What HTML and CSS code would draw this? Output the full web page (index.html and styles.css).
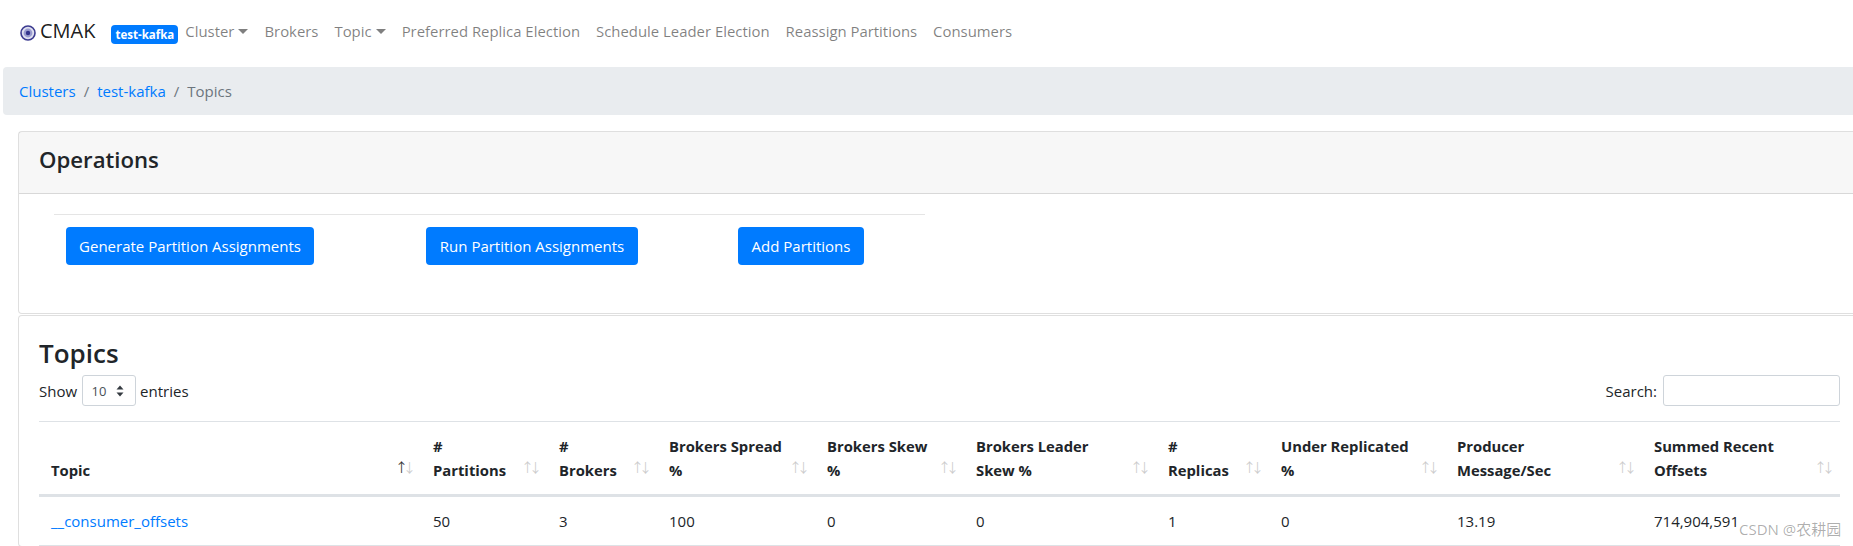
FILE: index.html
```html
<!DOCTYPE html>
<html lang="en">
<head>
    <meta charset="UTF-8">
    <meta name="viewport" content="width=device-width, initial-scale=1.0">
    <title>CMAK - Topics</title>
    <link rel="stylesheet" href="styles.css">
</head>
<body>
    <nav class="navbar">
        <a class="brand" href="#">
            <svg class="brand-icon" width="16" height="16" viewBox="0 0 16 16">
                <circle cx="8" cy="8" r="7" fill="#dfe0f0" stroke="#3b3a8f" stroke-width="1.6"/>
                <circle cx="8" cy="8" r="4.4" fill="#9a9ccf"/>
                <circle cx="8" cy="8" r="2.2" fill="#34348c"/>
            </svg>
            CMAK
        </a>
        <span class="badge">test-kafka</span>
        <ul class="nav-list">
            <li><a class="nav-link dropdown" href="#">Cluster</a></li>
            <li><a class="nav-link" href="#">Brokers</a></li>
            <li><a class="nav-link dropdown" href="#">Topic</a></li>
            <li><a class="nav-link" href="#">Preferred Replica Election</a></li>
            <li><a class="nav-link" href="#">Schedule Leader Election</a></li>
            <li><a class="nav-link" href="#">Reassign Partitions</a></li>
            <li><a class="nav-link" href="#">Consumers</a></li>
        </ul>
    </nav>

    <ol class="breadcrumb">
        <li><a href="#">Clusters</a></li>
        <li class="divider">/</li>
        <li><a href="#">test-kafka</a></li>
        <li class="divider">/</li>
        <li class="active">Topics</li>
    </ol>

    <div class="content">
        <section class="card">
            <h2 class="card-header">Operations</h2>
            <div class="card-body operations-body">
                <hr class="operations-rule">
                <div class="operations">
                    <a class="btn btn-generate" href="#">Generate Partition Assignments</a>
                    <a class="btn btn-run" href="#">Run Partition Assignments</a>
                    <a class="btn btn-add" href="#">Add Partitions</a>
                </div>
            </div>
        </section>

        <section class="card topics-card">
            <div class="card-body topics-body">
                <h3 class="topics-title">Topics</h3>
                <div class="table-controls">
                    <div class="length-control">
                        Show
                        <div class="select-box">
                            <span>10</span>
                            <svg width="8" height="12" viewBox="0 0 8 12"><path d="M4 0.5 7.5 4.6H0.5ZM4 11.5 0.5 7.4H7.5Z" fill="#343a40"/></svg>
                        </div>
                        entries
                    </div>
                    <label class="search-control">Search: <input type="search"></label>
                </div>
                <table class="topics-table">
                    <colgroup>
                        <col class="col-topic"><col class="col-partitions"><col class="col-brokers">
                        <col class="col-spread"><col class="col-skew"><col class="col-leader">
                        <col class="col-replicas"><col class="col-under"><col class="col-producer">
                        <col class="col-offsets">
                    </colgroup>
                    <thead>
                        <tr>
                            <th class="sorting sorted">Topic</th>
                            <th class="sorting">#<br>Partitions</th>
                            <th class="sorting">#<br>Brokers</th>
                            <th class="sorting">Brokers Spread<br>%</th>
                            <th class="sorting">Brokers Skew<br>%</th>
                            <th class="sorting">Brokers Leader<br>Skew %</th>
                            <th class="sorting">#<br>Replicas</th>
                            <th class="sorting">Under Replicated<br>%</th>
                            <th class="sorting">Producer<br>Message/Sec</th>
                            <th class="sorting">Summed Recent<br>Offsets</th>
                        </tr>
                    </thead>
                    <tbody>
                        <tr>
                            <td><a href="#">__consumer_offsets</a></td>
                            <td>50</td>
                            <td>3</td>
                            <td>100</td>
                            <td>0</td>
                            <td>0</td>
                            <td>1</td>
                            <td>0</td>
                            <td>13.19</td>
                            <td>714,904,591</td>
                        </tr>
                    </tbody>
                </table>
            </div>
        </section>
    </div>

    <div class="watermark">CSDN @农耕园</div>
</body>
</html>
```

FILE: styles.css
```css
html, body {
    height: 546px;
    overflow: hidden;
}

body {
    margin: 0;
    width: 1880px;
    font-family: 'Open Sans', 'Noto Sans CJK SC', sans-serif;
    font-size: 15px;
    line-height: 24px;
    color: #212529;
    background-color: #fff;
}

a {
    color: #007bff;
    text-decoration: none;
}

.navbar {
    display: flex;
    align-items: center;
    height: 40px;
    padding: 11px 0 16px 20px;
}

.brand {
    display: flex;
    align-items: center;
    gap: 4px;
    font-size: 20px;
    color: rgba(0, 0, 0, 0.9);
    margin-right: 16px;
}

.brand-icon {
    margin-top: 4px;
}

.badge {
    padding: 0 4px;
    height: 19px;
    margin-top: 6px;
    border-radius: 4px;
    background-color: #007bff;
    color: #fff;
    font-size: 11.5px;
    font-weight: 700;
    line-height: 19px;
}

.nav-list {
    display: flex;
    list-style: none;
    margin: 0 0 0 -1px;
    padding: 0;
    font-size: 14.9px;
}

.nav-link {
    display: block;
    padding: 0 8px;
    color: rgba(0, 0, 0, 0.5);
}

.dropdown::after {
    content: "";
    display: inline-block;
    margin-left: 4px;
    vertical-align: 3px;
    border-top: 5px solid;
    border-left: 5px solid transparent;
    border-right: 5px solid transparent;
}

.breadcrumb {
    display: flex;
    gap: 8px;
    list-style: none;
    margin: 0 0 16px 3px;
    padding: 12px 16px;
    border-radius: 4px;
    background-color: #e9ecef;
}

.divider, .active {
    color: #6c757d;
}

.content {
    margin-left: 18px;
}

.card {
    border: 1px solid rgba(0, 0, 0, 0.125);
    border-radius: 4px;
    background-color: #fff;
}

.topics-card {
    margin-top: 1px;
}

.card-header {
    margin: 0;
    padding: 10px 20px 16px;
    height: 35px;
    border-bottom: 1px solid rgba(0, 0, 0, 0.125);
    background-color: rgba(0, 0, 0, 0.03);
    font-size: 22.2px;
    font-weight: 600;
    line-height: 35px;
}

.operations-body {
    height: 119px;
    padding-left: 35px;
}

.operations-rule {
    width: 871px;
    margin: 0;
    position: relative;
    top: 20px;
    border: 0;
    border-top: 1px solid rgba(0, 0, 0, 0.1);
}

.operations {
    display: flex;
    padding: 32px 0 0 12px;
}

.btn {
    box-sizing: border-box;
    height: 38px;
    border-radius: 4px;
    background-color: #007bff;
    color: #fff;
    text-align: center;
    line-height: 38px;
}

.btn-generate {
    width: 248px;
    margin-right: 112px;
}

.btn-run {
    width: 212px;
    margin-right: 100px;
}

.btn-add {
    width: 126px;
}

.topics-body {
    width: 1801px;
    padding: 19px 20px 0;
}

.topics-title {
    margin: 0;
    height: 37px;
    font-size: 26px;
    font-weight: 600;
    line-height: 37px;
}

.table-controls {
    display: flex;
    justify-content: space-between;
    align-items: center;
    height: 31px;
    margin: 3px 0 15px;
}

.length-control {
    display: flex;
    align-items: center;
    gap: 4.5px;
}

.select-box {
    position: relative;
    box-sizing: border-box;
    width: 54px;
    height: 31px;
    padding-left: 9px;
    border: 1px solid #ced4da;
    border-radius: 3px;
    color: #495057;
    font-size: 13px;
    line-height: 30px;
}

.select-box svg {
    position: absolute;
    top: 9px;
    right: 11px;
}

.search-control {
    display: flex;
    align-items: center;
    gap: 6px;
}

.search-control input {
    box-sizing: border-box;
    width: 177px;
    height: 31px;
    padding: 4px 8px;
    border: 1px solid #ced4da;
    border-radius: 3px;
}

.topics-table {
    width: 1801px;
    table-layout: fixed;
    border-collapse: collapse;
}

.col-topic { width: 382px; }
.col-partitions { width: 126px; }
.col-brokers { width: 110px; }
.col-spread { width: 158px; }
.col-skew { width: 149px; }
.col-leader { width: 192px; }
.col-replicas { width: 113px; }
.col-under { width: 176px; }
.col-producer { width: 197px; }
.col-offsets { width: 198px; }

.topics-table th, .topics-table td {
    padding: 12px 30px 12px 12px;
    text-align: left;
}

.topics-table th {
    position: relative;
    vertical-align: bottom;
    border-top: 1px solid #dee2e6;
    border-bottom: 3px solid #dee2e6;
    font-weight: 700;
    font-size: 14.8px;
}

.topics-table td {
    padding-right: 0;
    border-bottom: 1px solid #dee2e6;
}

.sorting::before, .sorting::after {
    position: absolute;
    bottom: 15px;
    font-size: 13px;
    font-weight: 400;
    color: #000;
    opacity: 0.2;
}

.sorting::before {
    content: "↑";
    right: 13px;
}

.sorting::after {
    content: "↓";
    right: 5px;
}

.sorted::before {
    opacity: 0.8;
}

.watermark {
    position: absolute;
    top: 519px;
    left: 1739px;
    font-size: 15px;
    line-height: 20px;
    color: rgba(0, 0, 0, 0.33);
}
```
